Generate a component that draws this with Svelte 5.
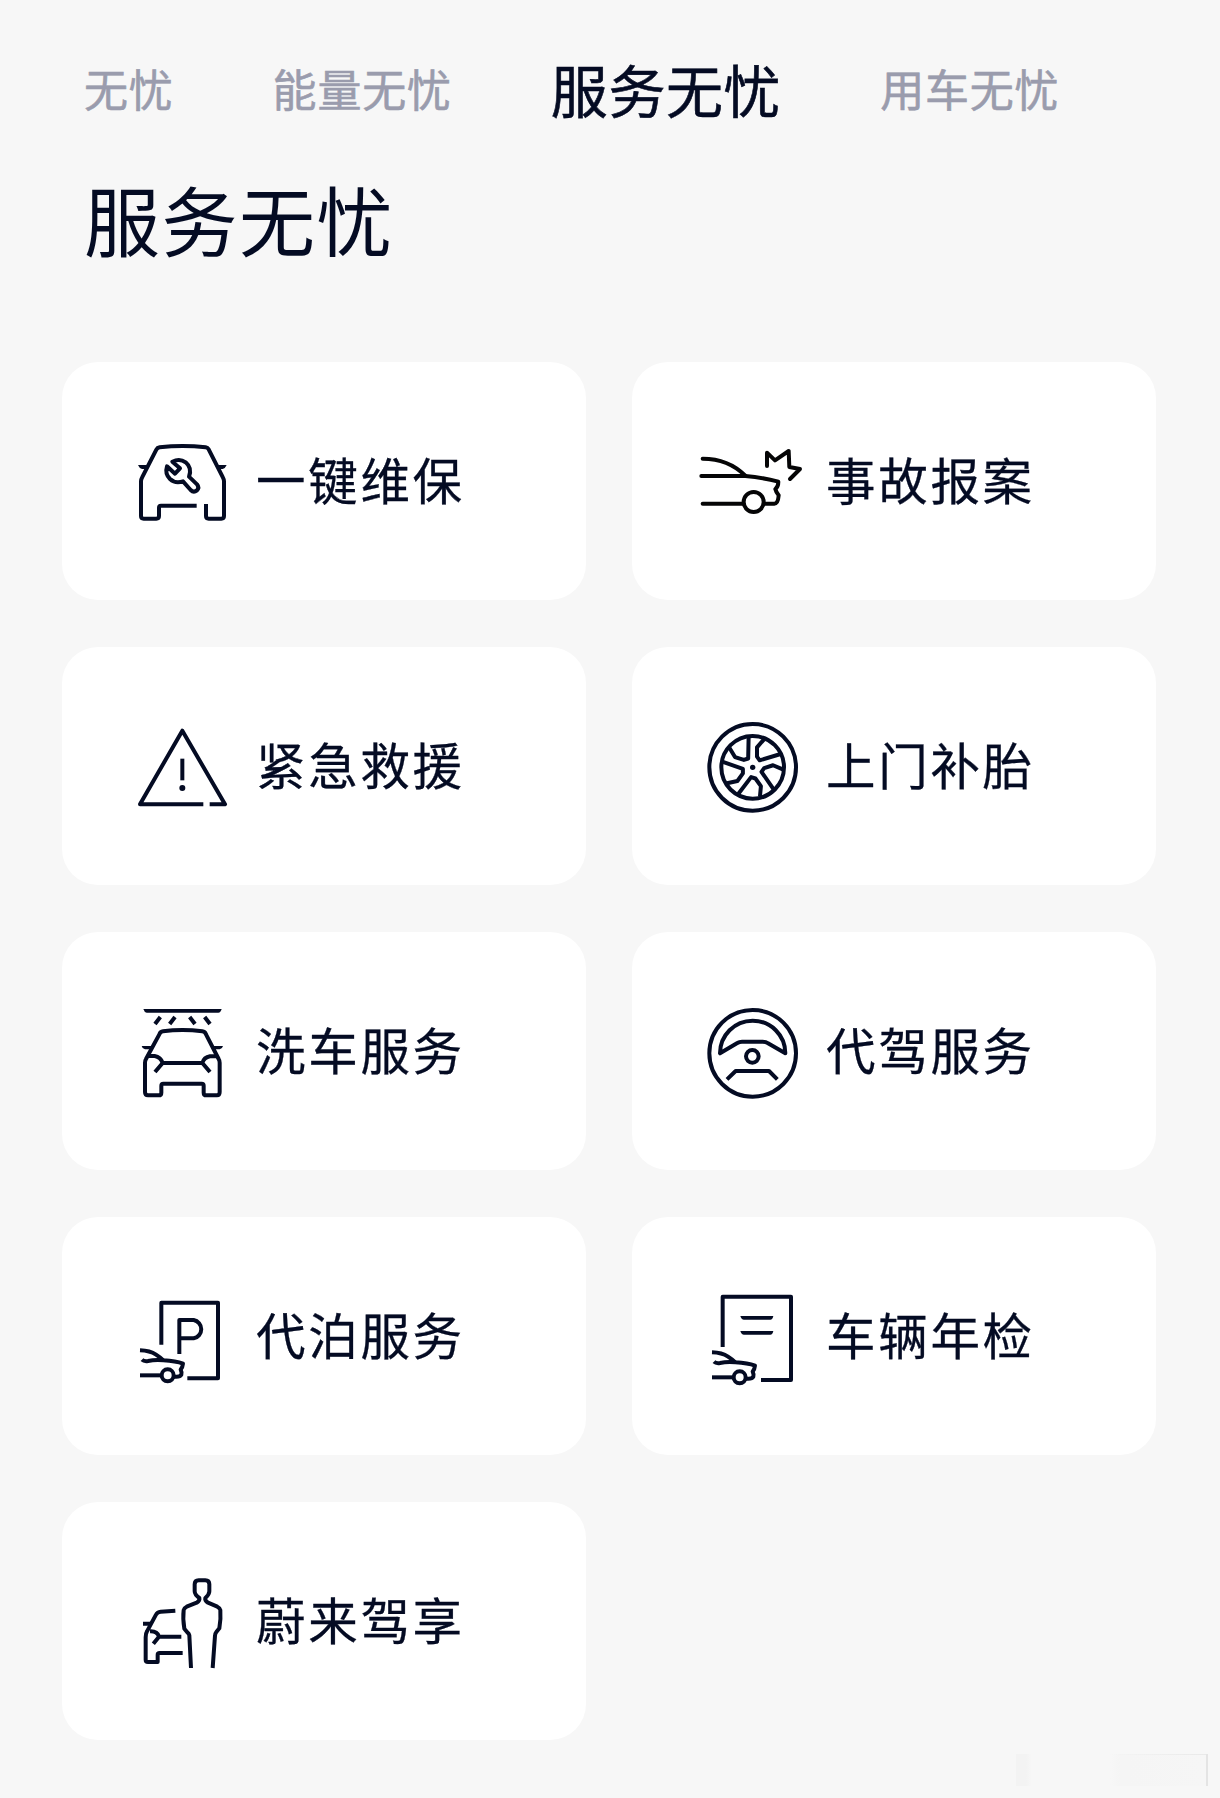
<script>
  const tabs = [
    { id: 'all', name: '无忧' },
    { id: 'energy', name: '能量无忧' },
    { id: 'service', name: '服务无忧' },
    { id: 'driving', name: '用车无忧' }
  ];

  const services = [
    { icon: 'repair', name: '一键维保', viewBox: '216 213 360 360' },
    { icon: 'crash', name: '事故报案', viewBox: '66 3 360 360' },
    { icon: 'rescue', name: '紧急救援', viewBox: '6 -12 360 360' },
    { icon: 'tire', name: '上门补胎', viewBox: '6 3 360 360' },
    { icon: 'wash', name: '洗车服务', viewBox: '6 3 360 360' },
    { icon: 'wheel', name: '代驾服务', viewBox: '6 3 360 360' },
    { icon: 'parking', name: '代泊服务', viewBox: '6 -12 360 360' },
    { icon: 'inspect', name: '车辆年检', viewBox: '6 -12 360 360' },
    { icon: 'chauffeur', name: '蔚来驾享', viewBox: '6 3 360 360' }
  ];

  const spokes = [0, 72, 144, 216, 288];

  let activeTab = $state('service');
</script>

{#snippet smallCar()}
  <path d="M60 211 Q90 212 108 224 Q122 233 130 241" />
  <path d="M66 239 Q72 245 84 243 Q104 239 130 241 Q168 243 189 251 Q188 262 182 269 Q186 276 184 284 Q180 292 162 290" />
  <circle cx="143" cy="286" r="18" />
  <path d="M60 286 H122" />
{/snippet}

<main>
  <nav>
    {#each tabs as tab}
      <button class:active={tab.id === activeTab} onclick={() => (activeTab = tab.id)}>{tab.name}</button>
    {/each}
  </nav>

  <h1>服务无忧</h1>

  <section class="grid">
    {#each services as service}
      <div class="card">
        <svg class="icon" class:black={service.icon === 'crash'} viewBox={service.viewBox}>
          {#if service.icon === 'repair'}
            <path d="M440 467 H333 Q327 467 327 473 V498 Q327 506 319 506 H281 Q273 506 273 498 V394 Q273 388 276 383 L319 299 Q322 293 329 292 Q398 284 467 292 Q473 293 476 298 L519 383 Q522 388 522 394 V498 Q522 506 514 506 H476 Q468 506 468 498 V462" />
            <path class="solid" d="M264 345 H296 L292 357 H276 Q268 355 264 345 Z M530 345 H498 L502 357 H518 Q526 355 530 345 Z" />
            <path d="M367 335 Q389 324 407 337 Q427 354 417 380 L441 403 Q449 413 441 421 Q431 429 422 420 L399 394 Q376 402 360 387 Q344 371 351 349 L375 371 L390 355 Z" />
          {:else if service.icon === 'crash'}
            <path d="M98 116 Q175 116 226 167" />
            <path d="M94 168 H226 Q280 173 325 185 Q325 200 316 207 Q318 216 326 226 Q324 251 313 251 H284" />
            <circle cx="251" cy="246" r="30" />
            <path d="M98 251 H220" />
            <path d="M291 138 V98 L315 121 L356 93 L358 141 L390 147 L360 177" />
          {:else if service.icon === 'rescue'}
            <path d="M250 283 H60 L187 62 L315 283 H269" />
            <path d="M187 146 V211" />
            <circle class="solid" cx="187" cy="234" r="9" />
          {:else if service.icon === 'tire'}
            <circle cx="188" cy="187" r="130" />
            <circle cx="188" cy="187" r="94" />
            <circle class="solid" cx="188" cy="187" r="8" />
            {#each spokes as angle}
              <path transform="rotate({angle} 188 187)" d="M222 103 L201 127 V155 L209 166 L272 147" />
            {/each}
          {:else if service.icon === 'wash'}
            <path class="solid" d="M70 57 H305 Q302 68 295 68 H80 Q73 67 70 57 Z" />
            <path d="M121 81 L105 102 M165 81 L149 102 M209 81 L225 102 M254 81 L270 102" />
            <path d="M118 133 Q121 125 129 124 Q187 116 247 124 Q255 125 258 133 L296 207 Q299 212 299 218 V306 Q299 316 291 316 H259 Q251 316 251 308 V287 Q251 281 245 281 H130 Q124 281 124 287 V308 Q124 316 116 316 H84 Q75 316 75 306 V218 Q75 212 78 207 Z" />
            <path class="solid" d="M65 168 H98 L93 178 H75 Q67 177 65 168 Z M309 168 H276 L281 178 H299 Q307 177 309 168 Z" />
            <path d="M84 198 H104 Q122 201 128 219 H247 Q252 202 270 199 H290 M128 219 L105 246 M247 219 L270 246" />
          {:else if service.icon === 'wheel'}
            <circle cx="188" cy="190" r="130" />
            <path d="M90 190 A98 98 0 0 1 286 190 L234 160 Q228 155 218 155 H156 Q148 155 142 159 Z" />
            <circle cx="187" cy="199" r="19" />
            <path d="M111 268 L137 243 H237 L262 268" />
          {:else if service.icon === 'parking'}
            <path d="M124 194 V68 H294 V295 H202" />
            <path d="M178 222 V120 H221 A28 28 0 0 1 221 175 H180" />
            {@render smallCar()}
          {:else if service.icon === 'inspect'}
            <path d="M98 201 V50 H303 V300 H213" />
            <path class="solid" d="M151 108 H250 Q248 119 241 119 H162 Q154 119 151 108 Z M151 153 H250 Q248 164 241 164 H162 Q154 164 151 153 Z" />
            <g transform="translate(6 6)">{@render smallCar()}</g>
          {:else if service.icon === 'chauffeur'}
            <path d="M213 324 L208 226 Q207 221 203 218 L193 206 Q188 175 191 150 Q192 144 200 140 L230 128 Q240 122 238 114 Q224 104 224 94 V73 Q224 61 236 61 H256 Q268 61 268 73 V94 Q268 104 256 114 Q254 122 264 128 L292 140 Q300 144 301 150 Q303 175 298 205 L289 216 Q285 221 285 227 L278 324" />
            <path d="M166 152 L122 155 Q112 156 108 164 L81 214 Q77 220 77 232 V299 Q77 306 84 306 H113 V284 Q113 279 119 279 H188" />
            <path d="M69 191 H94 M90 214 Q112 213 117 230 H184 M117 230 L100 251" />
          {/if}
        </svg>
        <span>{service.name}</span>
      </div>
    {/each}
  </section>

  <div class="mark"></div>
</main>

<style>
  :global(body) {
    background: #f7f7f7;
  }

  main {
    position: relative;
    box-sizing: border-box;
    height: 1798px;
    overflow: hidden;
    padding: 0 64px 0 62px;
    color: #040b23;
    background: #f7f7f7;
    font-family: 'Noto Sans CJK SC', sans-serif;
  }

  nav {
    display: flex;
    align-items: center;
    height: 176px;
    padding-left: 22px;
    gap: 99px;
    white-space: nowrap;
  }

  button {
    padding: 0;
    border: none;
    background: none;
    color: #9a9cad;
    font-family: inherit;
    font-size: 44px;
    font-weight: 400;
    letter-spacing: 0.8px;
    line-height: 64px;
    -webkit-text-stroke: 0.6px;
    cursor: pointer;
  }

  button.active {
    color: #040b23;
    font-size: 57px;
    letter-spacing: 0.6px;
  }

  h1 {
    height: 186px;
    margin: 0;
    padding-left: 22px;
    font-size: 76px;
    font-weight: 400;
    letter-spacing: 1.5px;
    line-height: 84px;
  }

  .grid {
    display: grid;
    grid-template-columns: 523.5px 523.5px;
    grid-auto-rows: 238.4px;
    gap: 46.6px 46.5px;
  }

  .card {
    display: flex;
    align-items: center;
    box-sizing: border-box;
    padding-left: 60px;
    gap: 14px;
    border-radius: 36px;
    background: #fff;
  }

  .card span {
    padding-bottom: 4px;
    font-size: 49.5px;
    letter-spacing: 2.7px;
    line-height: 70px;
    white-space: nowrap;
    -webkit-text-stroke: 0.3px;
  }

  .icon {
    width: 120px;
    height: 120px;
    fill: none;
    stroke: #040b23;
    stroke-width: 12;
    stroke-linejoin: round;
  }

  .icon.black {
    stroke: #050506;
    stroke-linecap: round;
  }

  .solid {
    fill: #040b23;
    stroke: none;
  }

  .mark {
    position: absolute;
    right: 12px;
    bottom: 12px;
    box-sizing: border-box;
    width: 192px;
    height: 32px;
    border-right: 2px solid #e4e4e4;
    background:
      linear-gradient(90deg, transparent 50%, #e9e9e9) top / 100% 1px no-repeat,
      linear-gradient(90deg, #f3f3f3 0 10px, #f7f7f7 16px 94px, #f5f5f5 104px 112px, #f6f6f6);
  }
</style>
